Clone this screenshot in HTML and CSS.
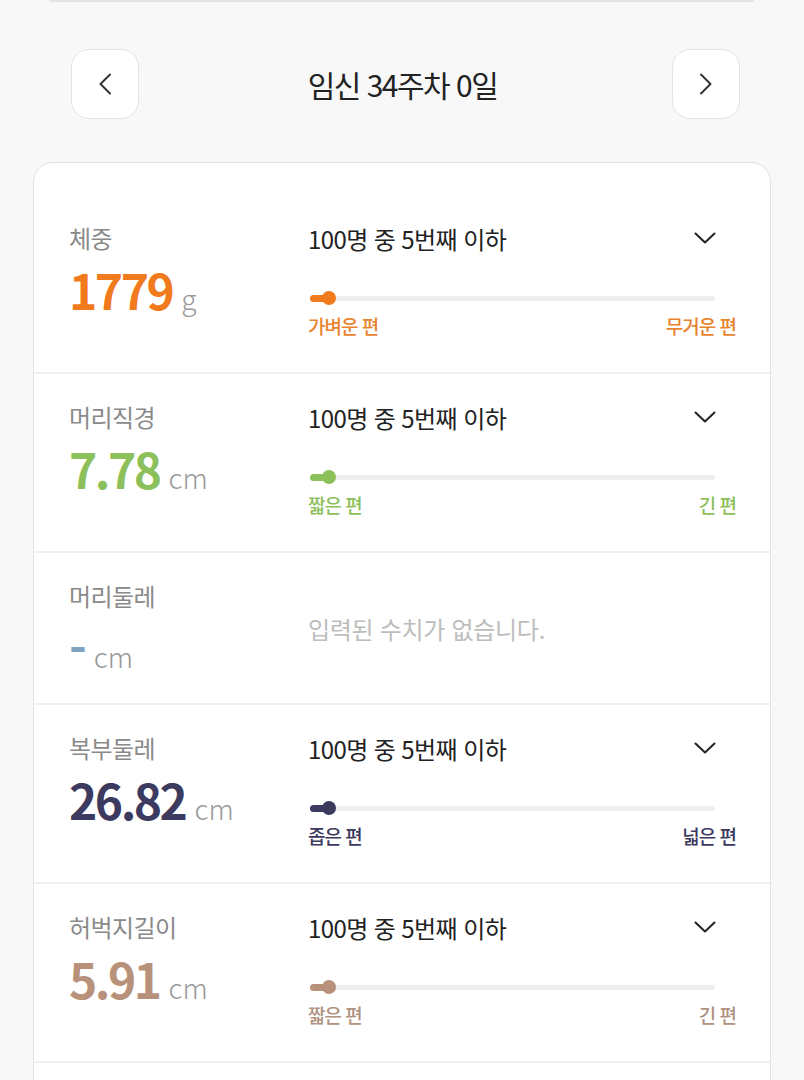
FILE: index.html
```html
<!DOCTYPE html>
<html lang="ko">
<head>
<meta charset="utf-8">
<title>임신 34주차 0일</title>
<link rel="stylesheet" href="styles.css">
</head>
<body>
<div class="topline"></div>
<header class="nav">
  <button class="navbtn" aria-label="이전">
    <svg width="14" height="22" viewBox="0 0 14 22"><path d="M12 1.5 L2.5 11 L12 20.5" fill="none" stroke="#333" stroke-width="2" stroke-linecap="round" stroke-linejoin="round"/></svg>
  </button>
  <h1 class="title">임신 34주차 0일</h1>
  <button class="navbtn" aria-label="다음">
    <svg width="14" height="22" viewBox="0 0 14 22"><path d="M2 1.5 L11.5 11 L2 20.5" fill="none" stroke="#333" stroke-width="2" stroke-linecap="round" stroke-linejoin="round"/></svg>
  </button>
</header>

<section class="card">
  <div class="row c-orange">
    <div class="left">
      <div class="label">체중</div>
      <div class="value"><span class="num">1779</span><span class="unit">g</span></div>
    </div>
    <div class="right">
      <div class="rhead"><span>100명 중 5번째 이하</span>
        <svg class="chev" width="22" height="12" viewBox="0 0 22 12"><path d="M1.5 1.5 L11 10.5 L20.5 1.5" fill="none" stroke="#222" stroke-width="2" stroke-linecap="round" stroke-linejoin="round"/></svg>
      </div>
      <div class="track"><div class="fill" style="width:19px"></div><div class="dot" style="left:19px"></div></div>
      <div class="ends"><span>가벼운 편</span><span>무거운 편</span></div>
    </div>
  </div>

  <div class="row c-green">
    <div class="left">
      <div class="label">머리직경</div>
      <div class="value"><span class="num">7.78</span><span class="unit">cm</span></div>
    </div>
    <div class="right">
      <div class="rhead"><span>100명 중 5번째 이하</span>
        <svg class="chev" width="22" height="12" viewBox="0 0 22 12"><path d="M1.5 1.5 L11 10.5 L20.5 1.5" fill="none" stroke="#222" stroke-width="2" stroke-linecap="round" stroke-linejoin="round"/></svg>
      </div>
      <div class="track"><div class="fill" style="width:19px"></div><div class="dot" style="left:19px"></div></div>
      <div class="ends"><span>짧은 편</span><span>긴 편</span></div>
    </div>
  </div>

  <div class="row c-blue empty">
    <div class="left">
      <div class="label">머리둘레</div>
      <div class="value"><span class="num dash">-</span><span class="unit">cm</span></div>
    </div>
    <div class="right message">입력된 수치가 없습니다.</div>
  </div>

  <div class="row c-navy">
    <div class="left">
      <div class="label">복부둘레</div>
      <div class="value"><span class="num">26.82</span><span class="unit">cm</span></div>
    </div>
    <div class="right">
      <div class="rhead"><span>100명 중 5번째 이하</span>
        <svg class="chev" width="22" height="12" viewBox="0 0 22 12"><path d="M1.5 1.5 L11 10.5 L20.5 1.5" fill="none" stroke="#222" stroke-width="2" stroke-linecap="round" stroke-linejoin="round"/></svg>
      </div>
      <div class="track"><div class="fill" style="width:19px"></div><div class="dot" style="left:19px"></div></div>
      <div class="ends"><span>좁은 편</span><span>넓은 편</span></div>
    </div>
  </div>

  <div class="row c-brown">
    <div class="left">
      <div class="label">허벅지길이</div>
      <div class="value"><span class="num">5.91</span><span class="unit">cm</span></div>
    </div>
    <div class="right">
      <div class="rhead"><span>100명 중 5번째 이하</span>
        <svg class="chev" width="22" height="12" viewBox="0 0 22 12"><path d="M1.5 1.5 L11 10.5 L20.5 1.5" fill="none" stroke="#222" stroke-width="2" stroke-linecap="round" stroke-linejoin="round"/></svg>
      </div>
      <div class="track"><div class="fill" style="width:19px"></div><div class="dot" style="left:19px"></div></div>
      <div class="ends"><span>짧은 편</span><span>긴 편</span></div>
    </div>
  </div>

  <div class="spacer"></div>
</section>
</body>
</html>
```

FILE: styles.css
```css
* { box-sizing: border-box; }
html, body { margin: 0; padding: 0; }
body {
  background: #f8f8f8;
  font-family: "Noto Sans CJK KR", "Noto Sans", sans-serif;
  color: #222;
  width: 804px;
  overflow: hidden;
}
.topline {
  height: 2px;
  margin: 0 50px 0 49px;
  background: #e3e3e3;
  border-radius: 0 0 2px 2px;
}
.nav {
  display: grid;
  grid-template-columns: 68px 1fr 68px;
  align-items: center;
  margin: 47px 64px 0 71px;
}
.navbtn {
  width: 68px;
  height: 70px;
  border: 1.5px solid #e3e3e3;
  border-radius: 18px;
  background: #fff;
  display: flex;
  align-items: center;
  justify-content: center;
  padding: 0;
}
.title {
  margin: 0;
  text-align: center;
  font-size: 30px;
  font-weight: 400;
  letter-spacing: -1.5px;
  color: #222;
  line-height: 40px;
  position: relative;
  left: -3px;
}
.card {
  margin: 43px 33px 0 33px;
  background: #fff;
  border: 1px solid #e2e2e2;
  border-radius: 20px;
  padding-top: 32px;
}
.row {
  display: flex;
  align-items: flex-start;
  padding: 26px 34px 24px 35px;
  border-bottom: 2px solid #f0f0f0;
}
.left { width: 239px; flex: none; }
.label {
  font-size: 24px;
  line-height: 34px;
  color: #8a8a8a;
  letter-spacing: -0.6px;
}
.value {
  height: 66px;
  padding-top: 6px;
  line-height: 56px;
  white-space: nowrap;
}
.num {
  font-size: 48px;
  font-weight: 700;
  letter-spacing: -2.5px;
  color: var(--c);
}
.num.dash { color: #7fa3c0; letter-spacing: 0; }
.unit {
  font-size: 28px;
  font-weight: 300;
  color: #999;
  margin-left: 9px;
}
.right { flex: 1; padding-bottom: 9px; }
.rhead {
  display: flex;
  justify-content: space-between;
  align-items: center;
  height: 34px;
  font-size: 24px;
  letter-spacing: -0.6px;
  color: #222;
}
.chev { margin-right: 20px; }
.track {
  position: relative;
  height: 14px;
  margin: 36px 21px 0 2px;
}
.track::before {
  content: "";
  position: absolute;
  left: 0; right: 0;
  top: 5px;
  height: 5px;
  border-radius: 3px;
  background: #efefef;
}
.fill {
  position: absolute;
  left: 0;
  top: 4px;
  height: 7px;
  border-radius: 4px;
  background: var(--c);
}
.dot {
  position: absolute;
  top: 0;
  width: 14px;
  height: 14px;
  margin-left: -7px;
  border-radius: 50%;
  background: var(--c);
}
.ends {
  display: flex;
  justify-content: space-between;
  margin-top: 8px;
  line-height: 26px;
  font-size: 19px;
  font-weight: 500;
  letter-spacing: -1px;
  color: var(--cl);
}
.empty .right.message {
  align-self: center;
  padding: 0;
  font-size: 24px;
  letter-spacing: -0.3px;
  color: #bdbdbd;
  line-height: 34px;
}
.empty .unit { margin-left: 7px; }
.spacer { height: 80px; }

.c-orange { --c: #f07a1c; --cl: #e8842f; }
.c-green { --c: #8cc05a; --cl: #8cbf5a; }
.c-blue { --c: #7fa3c0; --cl: #7fa3c0; }
.c-navy { --c: #3c3a5e; --cl: #3c3a5e; }
.c-brown { --c: #b8917a; --cl: #b09280; }
```
